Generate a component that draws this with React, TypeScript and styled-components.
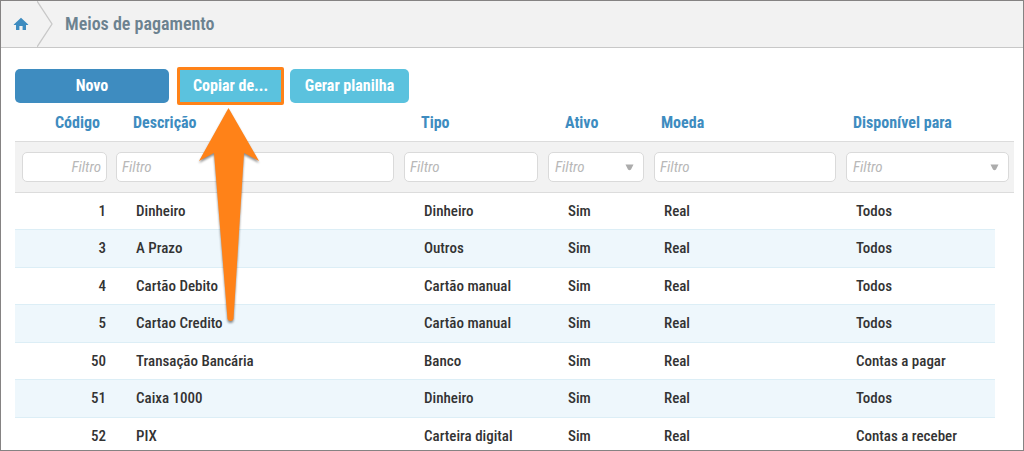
import React from "react";
import styled, { createGlobalStyle } from "styled-components";

const GlobalStyle = createGlobalStyle`
  *, *::before, *::after { box-sizing: border-box; }
  body {
    margin: 0;
    background: #fff;
    color: #333;
    font-family: "Roboto Condensed", "Liberation Sans Narrow", "Liberation Sans", sans-serif;
    font-size: 16px;
    line-height: 20px;
  }
`;

const Frame = styled.div`
  height: 100vh;
  overflow: hidden;
  border: 1px solid #858383;
`;

const Breadcrumb = styled.nav`
  display: flex;
  align-items: center;
  height: 47px;
  background: #f2f2f2;
  border-bottom: 1px solid #c8c8c8;
`;

const HomeLink = styled.a`
  display: flex;
  margin-left: 12px;
  color: #3e8cc0;
`;

const Chevron = styled.svg`
  margin-left: 8px;
  flex: none;
`;

const Title = styled.h1`
  margin: 0 0 0 12px;
  font-size: 18px;
  line-height: 24px;
  font-weight: 600;
  color: #6c8290;
`;

const Content = styled.main`
  padding: 19px 9px 0 14px;
`;

const Toolbar = styled.div`
  display: flex;
  align-items: center;
  height: 38px;
`;

const Button = styled.button<{ $primary?: boolean }>`
  width: ${(p) => (p.$primary ? "154px" : "119px")};
  height: 34px;
  padding: 0;
  border: 0;
  border-radius: 5px;
  background: ${(p) => (p.$primary ? "#3e8cc0" : "#5bc2de")};
  color: #fff;
  font: inherit;
  font-weight: 700;
`;

const Highlight = styled.div`
  position: relative;
  margin: 0 6px 0 8px;
  border: 3px solid #ff8218;
  border-radius: 2px;

  ${Button} {
    display: block;
    width: 101px;
    height: 32px;
    border-radius: 0;
  }
`;

const Arrow = styled.svg`
  position: absolute;
  top: 34px;
  left: 12px;
  z-index: 1;
  pointer-events: none;
  filter: drop-shadow(0 2px 1px rgba(0, 0, 0, 0.45));
`;

const Table = styled.table`
  width: 100%;
  table-layout: fixed;
  border-collapse: separate;
  border-spacing: 0;
`;

const Col = styled.col<{ $width?: number }>`
  width: ${(p) => (p.$width ? `${p.$width}px` : "auto")};
`;

type CellProps = { $numeric?: boolean; $indent: number };

const HeadCell = styled.th<CellProps>`
  height: 37px;
  padding: ${(p) => (p.$numeric ? "0 11px 0 0" : `0 0 0 ${p.$indent}px`)};
  border-bottom: 1px solid #dcdcdc;
  color: #3e8cc0;
  font-weight: 700;
  text-align: ${(p) => (p.$numeric ? "right" : "left")};
`;

const FilterCell = styled.td<{ $numeric?: boolean }>`
  height: 51px;
  padding: ${(p) => (p.$numeric ? "0 4px 0 7px" : "0 5px")};
  background: #f2f2f2;
  border-bottom: 1px solid #dcdcdc;
`;

const FilterInput = styled.input<{ $numeric?: boolean }>`
  display: block;
  width: 100%;
  height: 30px;
  padding: 0 5px;
  border: 1px solid #dadada;
  border-radius: 5px;
  background: #fff;
  color: #333;
  font: inherit;
  font-size: 15px;
  text-align: ${(p) => (p.$numeric ? "right" : "left")};

  &::placeholder {
    color: #b8b8b8;
    font-style: italic;
    opacity: 1;
  }
`;

const SelectBox = styled.div`
  display: grid;
  align-items: center;

  > * {
    grid-area: 1 / 1;
  }

  svg {
    justify-self: end;
    margin-right: 10px;
    pointer-events: none;
  }
`;

const FilterSelect = styled.select`
  width: 100%;
  height: 30px;
  padding: 0 6px;
  appearance: none;
  border: 1px solid #dadada;
  border-radius: 5px;
  background: #fff;
  color: #b8b8b8;
  font: inherit;
  font-size: 15px;
  font-style: italic;
`;

const BodyRow = styled.tr`
  height: 37px;

  &:nth-child(even) {
    height: 38px;
  }

  &:nth-child(even) > td:not(:last-child) {
    background: #eef7fc;
  }
`;

const Cell = styled.td<CellProps>`
  padding: ${(p) => (p.$numeric ? "0 5px 1px 0" : `0 0 1px ${p.$indent + 3}px`)};
  border-bottom: 1px solid #dceef6;
  font-size: 15px;
  font-weight: 500;
  text-align: ${(p) => (p.$numeric ? "right" : "left")};
  white-space: nowrap;
`;

const Gutter = styled.td`
  padding: 0;
`;

type Column = {
  label: string;
  width?: number;
  indent: number;
  numeric?: boolean;
  options?: string[];
};

const columns: Column[] = [
  { label: "Código", width: 96, indent: 0, numeric: true },
  { label: "Descrição", indent: 22 },
  { label: "Tipo", width: 144, indent: 22 },
  { label: "Ativo", width: 106, indent: 22, options: ["Sim", "Não"] },
  { label: "Moeda", width: 192, indent: 12 },
  {
    label: "Disponível para",
    width: 154,
    indent: 12,
    options: ["Todos", "Contas a pagar", "Contas a receber"],
  },
];

const rows = [
  ["1", "Dinheiro", "Dinheiro", "Sim", "Real", "Todos"],
  ["3", "A Prazo", "Outros", "Sim", "Real", "Todos"],
  ["4", "Cartão Debito", "Cartão manual", "Sim", "Real", "Todos"],
  ["5", "Cartao Credito", "Cartão manual", "Sim", "Real", "Todos"],
  ["50", "Transação Bancária", "Banco", "Sim", "Real", "Contas a pagar"],
  ["51", "Caixa 1000", "Dinheiro", "Sim", "Real", "Todos"],
  ["52", "PIX", "Carteira digital", "Sim", "Real", "Contas a receber"],
];

function Filter({ column }: { column: Column }) {
  const label = `Filtrar ${column.label}`;
  if (!column.options) {
    return <FilterInput $numeric={column.numeric} placeholder="Filtro" aria-label={label} />;
  }
  return (
    <SelectBox>
      <FilterSelect aria-label={label} defaultValue="">
        <option value="">Filtro</option>
        {column.options.map((o) => (
          <option key={o}>{o}</option>
        ))}
      </FilterSelect>
      <svg width="9" height="7" viewBox="0 0 9 7" aria-hidden="true">
        <path d="M0.5 0.5h8L6 5.5q-1.5 1.5-3 0z" fill="#acacac" />
      </svg>
    </SelectBox>
  );
}

export default function App() {
  const last = columns.length - 1;
  return (
    <>
      <GlobalStyle />
      <Frame>
        <Breadcrumb>
          <HomeLink href="#" aria-label="Início">
            <svg width="16" height="14" viewBox="0 0 16 14" aria-hidden="true">
              <path
                d="M8 .8 15.2 7.6V8H13V13H9.6V9H6.4V13H3V8H.8V7.6z"
                fill="currentColor"
              />
            </svg>
          </HomeLink>
          <Chevron width="16" height="46" viewBox="0 0 16 46" aria-hidden="true">
            <path d="M0 0 15 23 0 46" fill="none" stroke="#c8c8c8" strokeWidth="1.3" />
          </Chevron>
          <Title>Meios de pagamento</Title>
        </Breadcrumb>
        <Content>
          <Toolbar>
            <Button type="button" $primary>
              Novo
            </Button>
            <Highlight>
              <Button type="button">Copiar de...</Button>
              <Arrow width="72" height="224" viewBox="0 0 72 224" aria-hidden="true">
                <path
                  d="M36.5 4 67 57 52 49 41.5 215q-.5 2-3 2t-3-2L22 49 7 57z"
                  fill="#ff8218"
                />
              </Arrow>
            </Highlight>
            <Button type="button">Gerar planilha</Button>
          </Toolbar>
          <Table>
            <colgroup>
              {columns.map((c) => (
                <Col key={c.label} $width={c.width} />
              ))}
              <Col $width={19} />
            </colgroup>
            <thead>
              <tr>
                {columns.map((c, i) => (
                  <HeadCell
                    key={c.label}
                    scope="col"
                    colSpan={i === last ? 2 : 1}
                    $numeric={c.numeric}
                    $indent={c.indent}
                  >
                    {c.label}
                  </HeadCell>
                ))}
              </tr>
              <tr>
                {columns.map((c, i) => (
                  <FilterCell key={c.label} colSpan={i === last ? 2 : 1} $numeric={c.numeric}>
                    <Filter column={c} />
                  </FilterCell>
                ))}
              </tr>
            </thead>
            <tbody>
              {rows.map((row) => (
                <BodyRow key={row[0]}>
                  {row.map((value, i) => (
                    <Cell
                      key={columns[i].label}
                      $numeric={columns[i].numeric}
                      $indent={columns[i].indent}
                    >
                      {value}
                    </Cell>
                  ))}
                  <Gutter />
                </BodyRow>
              ))}
            </tbody>
          </Table>
        </Content>
      </Frame>
    </>
  );
}
